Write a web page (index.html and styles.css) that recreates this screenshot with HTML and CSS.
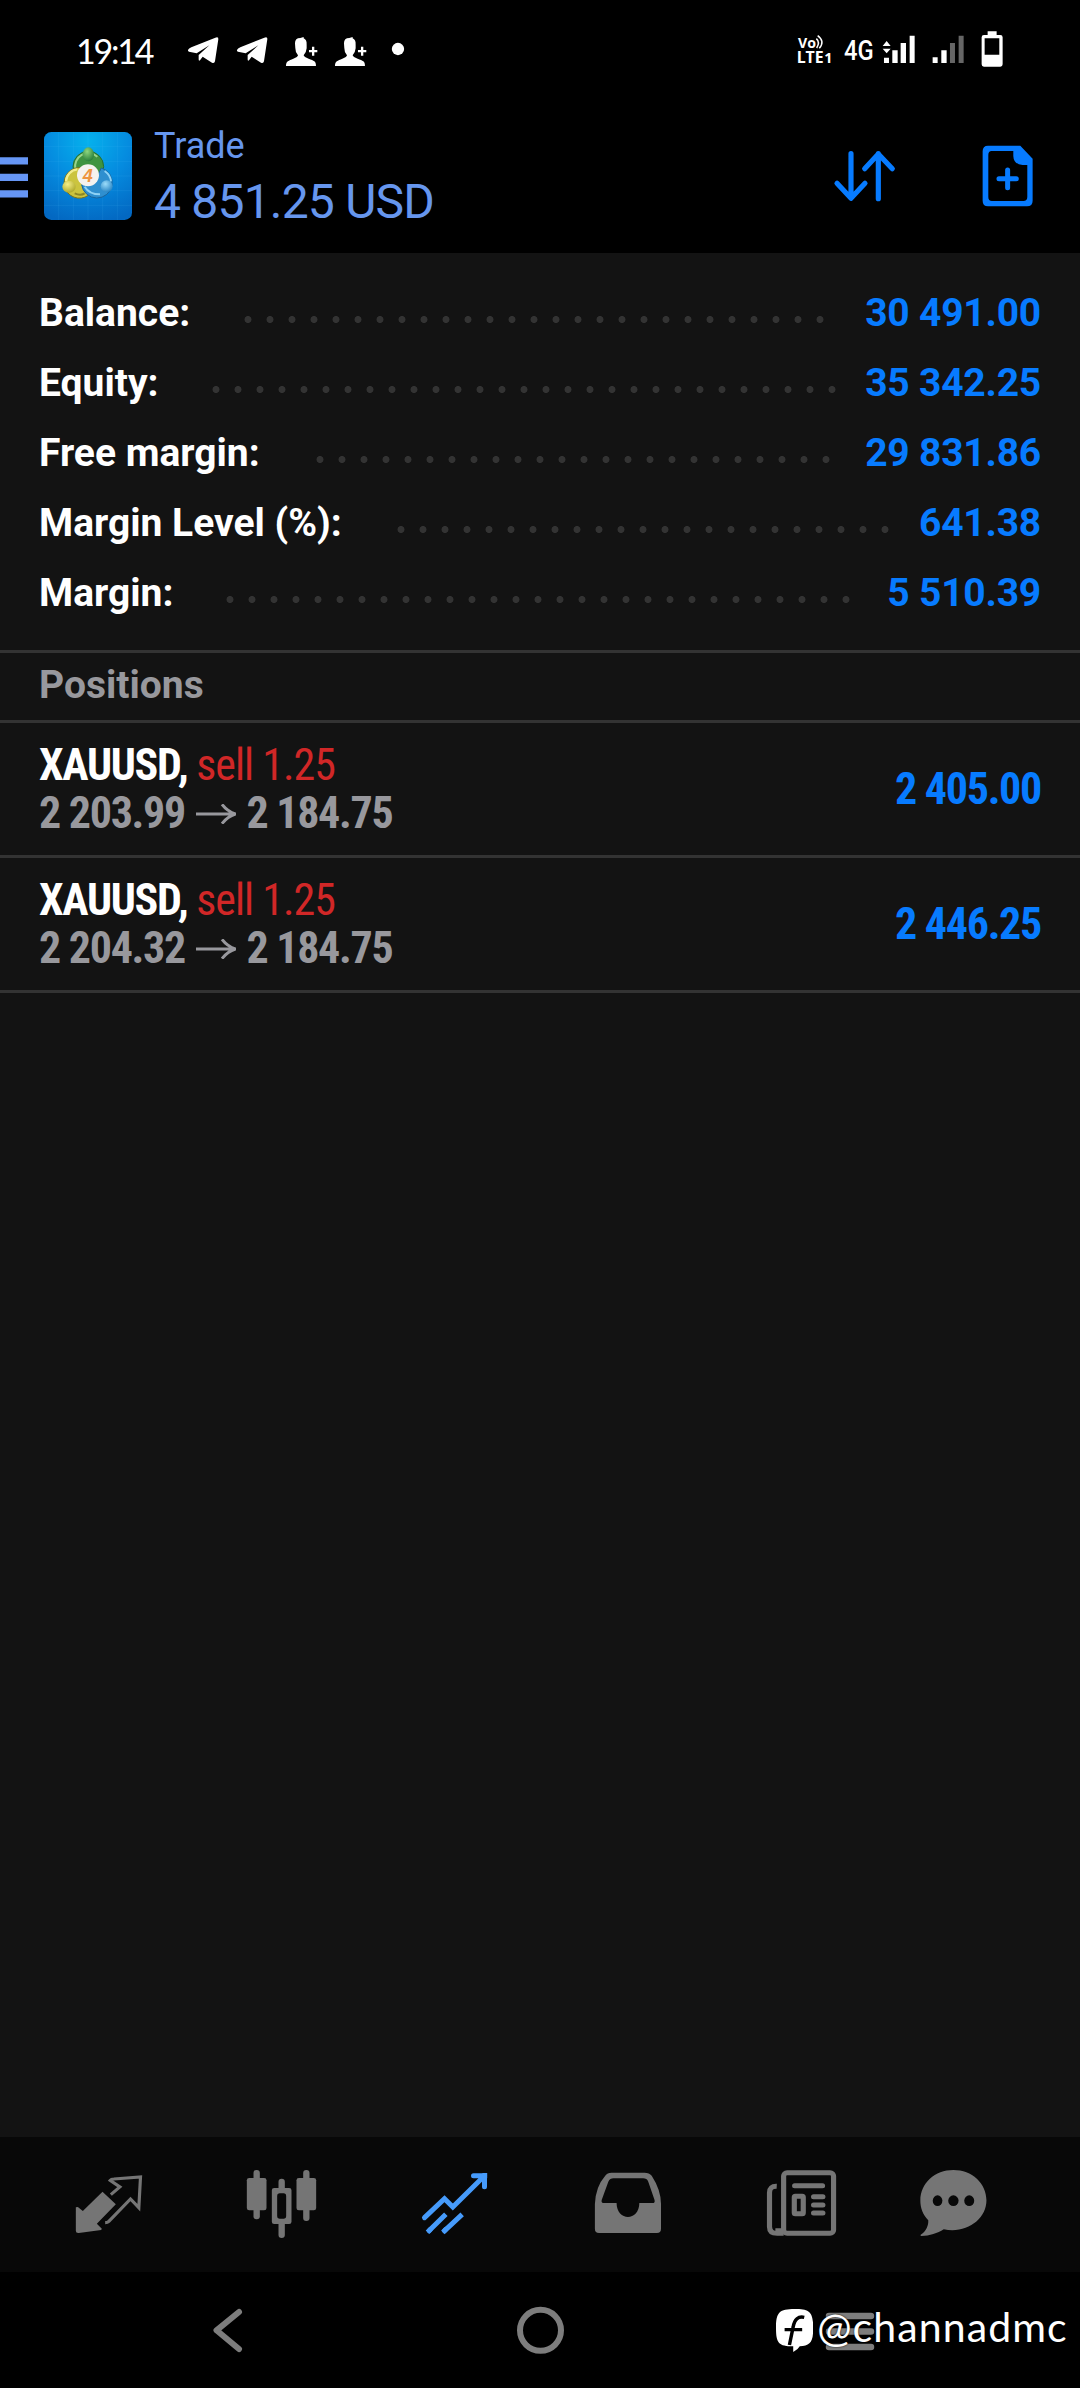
FILE: index.html
```html
<!DOCTYPE html>
<html lang="en">
<head>
<meta charset="utf-8">
<title>Trade</title>
<link rel="stylesheet" href="styles.css">
</head>
<body>
<div class="screen">
  <div class="status">
    <span class="clock">19:14</span>
    <svg class="status-left" viewBox="540 0 700 294" fill="#fff">
      <g id="plane"><path d="M564 150Q566 146 574 142L646 113Q656 109 655 118L645 184Q643 192 636 188L608 170L600 181Q596 185 596 178V165L628 136L590 160L567 155Q563 153 564 150Z"/></g>
      <use href="#plane" x="147"/>
      <g id="person"><path d="M858 198C858 183 866 182 880 176Q894 171 894 166Q886 158 886 144L885 130Q885 114 901 114L911 111V115Q921 119 920 134V145Q919 158 911 166Q912 171 926 176C942 182 948 183 948 198Z"/><path d="M927 150h9v-10h7v10h9v7h-9v10h-7v-10h-9z"/></g>
      <use href="#person" x="147"/>
      <circle cx="1194" cy="147" r="18.5"/>
    </svg>
    <svg class="status-right" viewBox="100 0 640 294" fill="#fff">
      <text><tspan class="t-vo" x="115" y="145" textLength="54" lengthAdjust="spacingAndGlyphs">Vo</tspan><tspan class="t-lte" x="111" y="189" textLength="81" lengthAdjust="spacingAndGlyphs">LTE</tspan><tspan class="t-one" x="194" y="189">1</tspan></text>
      <path d="M170 116Q182 127 171 144M174 107Q197 124 179 145" fill="none" stroke="#fff" stroke-width="4.5"/>
      <text class="t-4g" x="253" y="179" textLength="89" lengthAdjust="spacingAndGlyphs">4G</text>
      <path d="M369 138L381 123L393 138ZM369 146L381 160L393 146ZM373 173h15v16h-15zM398 151h16v38h-16zM423 129h16v60h-16zM450 107h15v82h-15zM519 172h15v17h-15zM545 151h16v38h-16z"/>
      <path fill="#666" d="M571 129h15v60h-15zM597 107h15v82h-15z"/>
      <path fill-rule="evenodd" d="M684 94h27v11h11q7 0 7 7v81q0 7-7 7h-49q-7 0-7-7v-81q0-7 7-7h11zM675 115v49h44v-49z"/>
    </svg>
  </div>

  <header class="header">
    <svg class="burger" viewBox="0 0 28 41"><path fill="#6696f5" d="M0 .3h28v7.2H0zM0 16.7h28v7.4H0zM0 33.3h28v7.2H0z"/></svg>
    <svg class="logo" viewBox="0 0 264 264">
      <defs>
        <radialGradient id="sky" cx=".5" cy=".1" r=".95"><stop offset="0" stop-color="#05b1ed"/><stop offset=".5" stop-color="#058bdf"/><stop offset="1" stop-color="#0368c2"/></radialGradient>
        <radialGradient id="gr" cx=".4" cy=".3" r=".8"><stop offset="0" stop-color="#8ed67f"/><stop offset="1" stop-color="#1c7430"/></radialGradient>
        <radialGradient id="ye" cx=".4" cy=".3" r=".8"><stop offset="0" stop-color="#f6ef88"/><stop offset="1" stop-color="#a5a020"/></radialGradient>
        <radialGradient id="bl" cx=".4" cy=".3" r=".8"><stop offset="0" stop-color="#9cdcfa"/><stop offset="1" stop-color="#1879bd"/></radialGradient>
      </defs>
      <rect width="264" height="264" rx="22" fill="url(#sky)"/>
      <path d="M0 44H264M0 88H264M0 132H264M0 176H264M0 220H264M44 0V264M88 0V264M132 0V264M176 0V264M220 0V264" stroke="#5fc4ff" stroke-opacity=".16" stroke-width="2"/>
      <circle cx="133" cy="104" r="46" fill="#3f9440" stroke="#256e31" stroke-width="3"/>
      <path d="M94 112A40 40 0 0 1 160 74" fill="none" stroke="#9ad48a" stroke-width="6"/>
      <path d="M113 107A46 46 0 1 0 133 190L122 152Z" fill="#cbc43f" stroke="#77721f" stroke-width="3"/>
      <path d="M66 148A38 38 0 0 1 100 112" fill="none" stroke="#f2ec8c" stroke-width="7"/>
      <path d="M92 184Q110 192 122 184" fill="none" stroke="#8d8725" stroke-width="6"/>
      <path d="M172 108A46 46 0 1 1 113 158L150 150Z" fill="#2f8fcf" stroke="#19649c" stroke-width="3"/>
      <path d="M122 164Q136 187 168 187M182 117Q200 130 201 148" fill="none" stroke="#8fd2f5" stroke-width="6"/>
      <ellipse cx="133" cy="67" rx="17" ry="21" fill="url(#gr)"/>
      <ellipse cx="75" cy="164" rx="20" ry="18" fill="url(#ye)"/>
      <ellipse cx="188" cy="163" rx="18" ry="18" fill="url(#bl)"/>
      <circle cx="132" cy="130" r="33" fill="#f5f2ee"/>
      <text class="t-logo" x="116" y="150">4</text>
    </svg>
    <div class="titles">
      <div class="title">Trade</div>
      <div class="total">4 851.25 USD</div>
    </div>
    <svg class="actions" viewBox="220 426 610 204">
      <path d="M274 461V594M232 550L274 595L316 550M356 596V461M315 506L356 462L398 506" fill="none" stroke="#077bff" stroke-width="15.5" stroke-linecap="round" stroke-linejoin="round"/>
      <path fill="#077bff" fill-rule="evenodd" d="M685 437H782L819 476V602Q819 619 802 619H685Q669 619 669 602V454Q669 437 685 437ZM696 453Q686 453 686 465V591Q686 603 697 603H791Q803 603 803 591V495H789Q762 493 761 468V453Z"/>
      <path d="M744 510V563M718 536H770" stroke="#077bff" stroke-width="15" stroke-linecap="round"/>
    </svg>
  </header>

  <main class="content">
    <section class="summary">
      <div class="row balance"><span class="label">Balance:</span><span class="dots"></span><span class="value">30 491.00</span></div>
      <div class="row equity"><span class="label">Equity:</span><span class="dots"></span><span class="value">35 342.25</span></div>
      <div class="row free"><span class="label">Free margin:</span><span class="dots"></span><span class="value">29 831.86</span></div>
      <div class="row level"><span class="label">Margin Level (%):</span><span class="dots"></span><span class="value">641.38</span></div>
      <div class="row margin"><span class="label">Margin:</span><span class="dots"></span><span class="value">5 510.39</span></div>
    </section>
    <h2 class="section-title">Positions</h2>
    <article class="position">
      <div class="deal">
        <div class="symbol"><b>XAUUSD,</b> <span class="sell">sell 1.25</span></div>
        <div class="prices"><span class="from">2 203.99</span><svg class="arrow" viewBox="0 0 120 60"><path d="M0 30H116M78 1Q94 22 118 30Q94 38 78 59" fill="none" stroke="#98989d" stroke-width="9"/></svg><span>2 184.75</span></div>
      </div>
      <div class="profit">2 405.00</div>
    </article>
    <article class="position">
      <div class="deal">
        <div class="symbol"><b>XAUUSD,</b> <span class="sell">sell 1.25</span></div>
        <div class="prices"><span class="from">2 204.32</span><svg class="arrow" viewBox="0 0 120 60"><path d="M0 30H116M78 1Q94 22 118 30Q94 38 78 59" fill="none" stroke="#98989d" stroke-width="9"/></svg><span>2 184.75</span></div>
      </div>
      <div class="profit">2 446.25</div>
    </article>
  </main>

  <nav class="tabs">
    <svg viewBox="85.5 21 240 405">
      <path fill="#757575" d="M186 185L226 223L169 281L184 296L182 300L115 309Q106 310 106 302V232L112 231L127 243Z"/>
      <path fill="none" stroke="#757575" stroke-width="9.500" d="M211 194L238 171L209 151Q212 147 220 147L300 141L295 233L270 207L205 274Q201 278 194 278"/>
    </svg>
    <svg viewBox="604.5 21 240 405" fill="#757575">
      <rect x="639" y="120" width="19" height="148" rx="9"/><rect x="619" y="144" width="59" height="97" rx="7"/>
      <rect x="788" y="120" width="19" height="153" rx="9"/><rect x="768" y="144" width="59" height="97" rx="7"/>
      <path d="M714 155q0-9 9.500-9t9.500 9v19h13q7 0 7 7v94q0 7-7 7h-13v33q0 9-9.500 9t-9.500-9v-33h-13q-7 0-7-7v-94q0-7 7-7h13z"/>
      <rect x="710" y="190" width="27" height="76" rx="8" fill="#080808"/>
    </svg>
    <svg viewBox="1123.5 21 240 405" fill="none" stroke="#469bfb" stroke-width="15">
      <path stroke-linecap="round" d="M1152 263L1212 206L1237 231L1332 137M1299 137H1332V170"/>
      <path d="M1324 129H1340V145Z" fill="#469bfb" stroke="none"/>
      <path d="M1161 307L1216 253M1207 307L1265 253"/><path stroke-linecap="round" d="M1166 302L1170 298M1212 302L1216 298"/>
    </svg>
    <svg viewBox="138 21 232.300 405" preserveAspectRatio="none" fill="#757575">
      <path fill-rule="evenodd" d="M206 128H302Q316 128 323 137Q350 180 350 222V296Q350 309 338 309H170Q158 309 158 296V222Q160 170 188 137Q194 128 206 128ZM212 145Q202 145 197 155L178 209Q175 219 185 219H221C221 275 287 275 287 219H325Q334 219 331 209L313 155Q309 145 298 145Z"/>
    </svg>
    <svg viewBox="640.300 21 232.300 405" preserveAspectRatio="none" fill="none" stroke="#757575" stroke-width="15">
      <rect x="706" y="128" width="145" height="182" rx="10"/>
      <path d="M686 169Q665 168 665 188V290Q665 310 687 310H706M682 302H702"/>
      <path stroke-linecap="round" d="M738 167H819M793 200H820M793 225H820M793 249H820"/>
      <rect x="737" y="199" width="26" height="52" rx="3"/>
    </svg>
    <svg viewBox="1081.700 21 232.300 405" preserveAspectRatio="none" fill="#757575">
      <path d="M1199 120C1253 120 1295 160 1295 211C1295 268 1237 312 1171 298C1153 310 1130 318 1106 318Q1101 317 1106 313C1120 304 1127 286 1126 271C1110 254 1103 235 1103 211C1103 160 1145 120 1199 120Z"/>
      <g fill="#080808"><ellipse cx="1153" cy="212" rx="14" ry="16"/><ellipse cx="1199" cy="212" rx="15" ry="16"/><ellipse cx="1245" cy="212" rx="14.500" ry="16"/></g>
    </svg>
  </nav>

  <footer class="sysbar">
    <svg viewBox="0 0 80 116"><path d="M52 40L29.500 58.300L52 77" fill="none" stroke="#7d7d7d" stroke-width="6" stroke-linecap="round" stroke-linejoin="round"/></svg>
    <svg viewBox="0 0 80 116"><circle cx="41.500" cy="58.300" r="20.500" fill="none" stroke="#7d7d7d" stroke-width="6"/></svg>
    <svg viewBox="0 0 80 116"><path d="M18 44H60M18 59.500H60M18 75H60" fill="none" stroke="#7d7d7d" stroke-width="6.500" stroke-linecap="round"/></svg>
    <div class="credit">
      <svg class="credit-mark" viewBox="686 537 108 129" preserveAspectRatio="none">
        <path fill="#fff" d="M740 537C784 537 794 545 794 594C794 638 785 646 755 649Q750 659 736 666V649C694 649 686 640 686 594C686 546 696 537 740 537Z"/>
        <path d="M768 562Q742 556 736 590L725 645M711 599H762" fill="none" stroke="#000" stroke-width="10"/>
      </svg>
      <span class="handle">@channadmc</span>
    </div>
  </footer>
</div>
</body>
</html>
```
FILE: styles.css
```css
* { box-sizing: border-box; }
body { margin: 0; background: #000; font-family: Roboto, "Liberation Sans", sans-serif; }
svg { display: block; flex: none; }
.screen { width: 1080px; height: 2388px; display: flex; flex-direction: column; background: #000; overflow: hidden; }

.status { height: 98px; display: flex; align-items: flex-start; color: #fff; }
.clock { width: 180px; padding-left: 76px; font: 400 34px/102px Lato, sans-serif; letter-spacing: -2.2px; white-space: nowrap; }
.status-left { width: 233.3px; height: 98px; }
.status-right { width: 213.3px; height: 98px; margin-left: 380px; }
.t-vo { font: 700 45px "Open Sans", sans-serif; }
.t-lte { font: 700 47px "Open Sans", sans-serif; }
.t-one { font: 700 43px "Open Sans", sans-serif; }
.t-4g { font: 500 84px Roboto, sans-serif; }
.t-logo { font: italic 700 54px "Liberation Sans", sans-serif; fill: #ee9540; }

.header { height: 155px; display: flex; align-items: center; }
.burger { width: 28px; height: 41px; margin-top: 4px; }
.logo { width: 88px; height: 88px; margin-left: 16px; }
.titles { width: 480px; margin-left: 22px; color: #6696ee; white-space: nowrap; }
.title { font-size: 36px; line-height: 50px; }
.total { padding-top: 2px; font-size: 48px; line-height: 58px; letter-spacing: -0.8px; }
.actions { width: 203.3px; height: 68px; margin-left: 199px; }

.content { height: 1884px; background: #131313; }
.summary { height: 400px; padding: 25px 39px 22px; border-bottom: 3px solid #333; }
.row { display: flex; height: 70px; font-size: 39px; font-weight: 700; line-height: 70px; white-space: nowrap; }
.label { width: calc(var(--start) - 39px); flex: none; color: #fff; }
.dots { width: calc(var(--count) * 22px); height: 7px; margin-top: 38px; background: radial-gradient(circle at 11px 3.5px, #333 3.1px, transparent 3.8px) 0 0 / 22px 7px repeat-x; }
.value { margin-left: auto; color: #077bff; letter-spacing: -0.2px; }
.balance { --start: 236.6px; --count: 27; }
.equity { --start: 204.6px; --count: 29; }
.free { --start: 308.6px; --count: 24; }
.level { --start: 389.5px; --count: 23; }
.margin { --start: 219.4px; --count: 29; }

.section-title { margin: 0; height: 70px; padding-left: 39px; border-bottom: 3px solid #333; color: #98989d; font-size: 39px; font-weight: 700; line-height: 64px; }
.position { height: 135px; padding: 18px 39px 0; display: flex; border-bottom: 3px solid #333; font-size: 44px; font-stretch: 75%; letter-spacing: -1.3px; }
.deal { line-height: 48px; white-space: nowrap; }
.symbol { height: 48px; color: #fff; }
.sell { color: #d12727; letter-spacing: -1px; }
.prices { display: flex; color: #98989d; font-weight: 700; }
.arrow { width: 40px; height: 20px; margin: 15px 10.5px 0 11px; }
.profit { margin-left: auto; color: #077bff; font-weight: 700; line-height: 97px; }

.tabs { height: 135px; padding-left: 22px; display: grid; grid-template-columns: repeat(5, 173px) 131px; justify-items: center; background: #080808; }
.tabs svg { width: 80px; height: 135px; }

.sysbar { position: relative; height: 116px; padding-left: 71px; display: grid; grid-template-columns: repeat(3, 312px); justify-items: center; }
.sysbar > svg { width: 80px; height: 116px; }
.credit { position: absolute; left: 776px; top: 28px; display: flex; align-items: flex-start; color: #fff; }
.credit-mark { width: 37.200px; height: 43px; margin-top: 9px; }
.handle { margin-left: 4px; font: 400 41px/54px Lato, sans-serif; letter-spacing: 1.1px; text-shadow: 0 0 2px #000; }
```
